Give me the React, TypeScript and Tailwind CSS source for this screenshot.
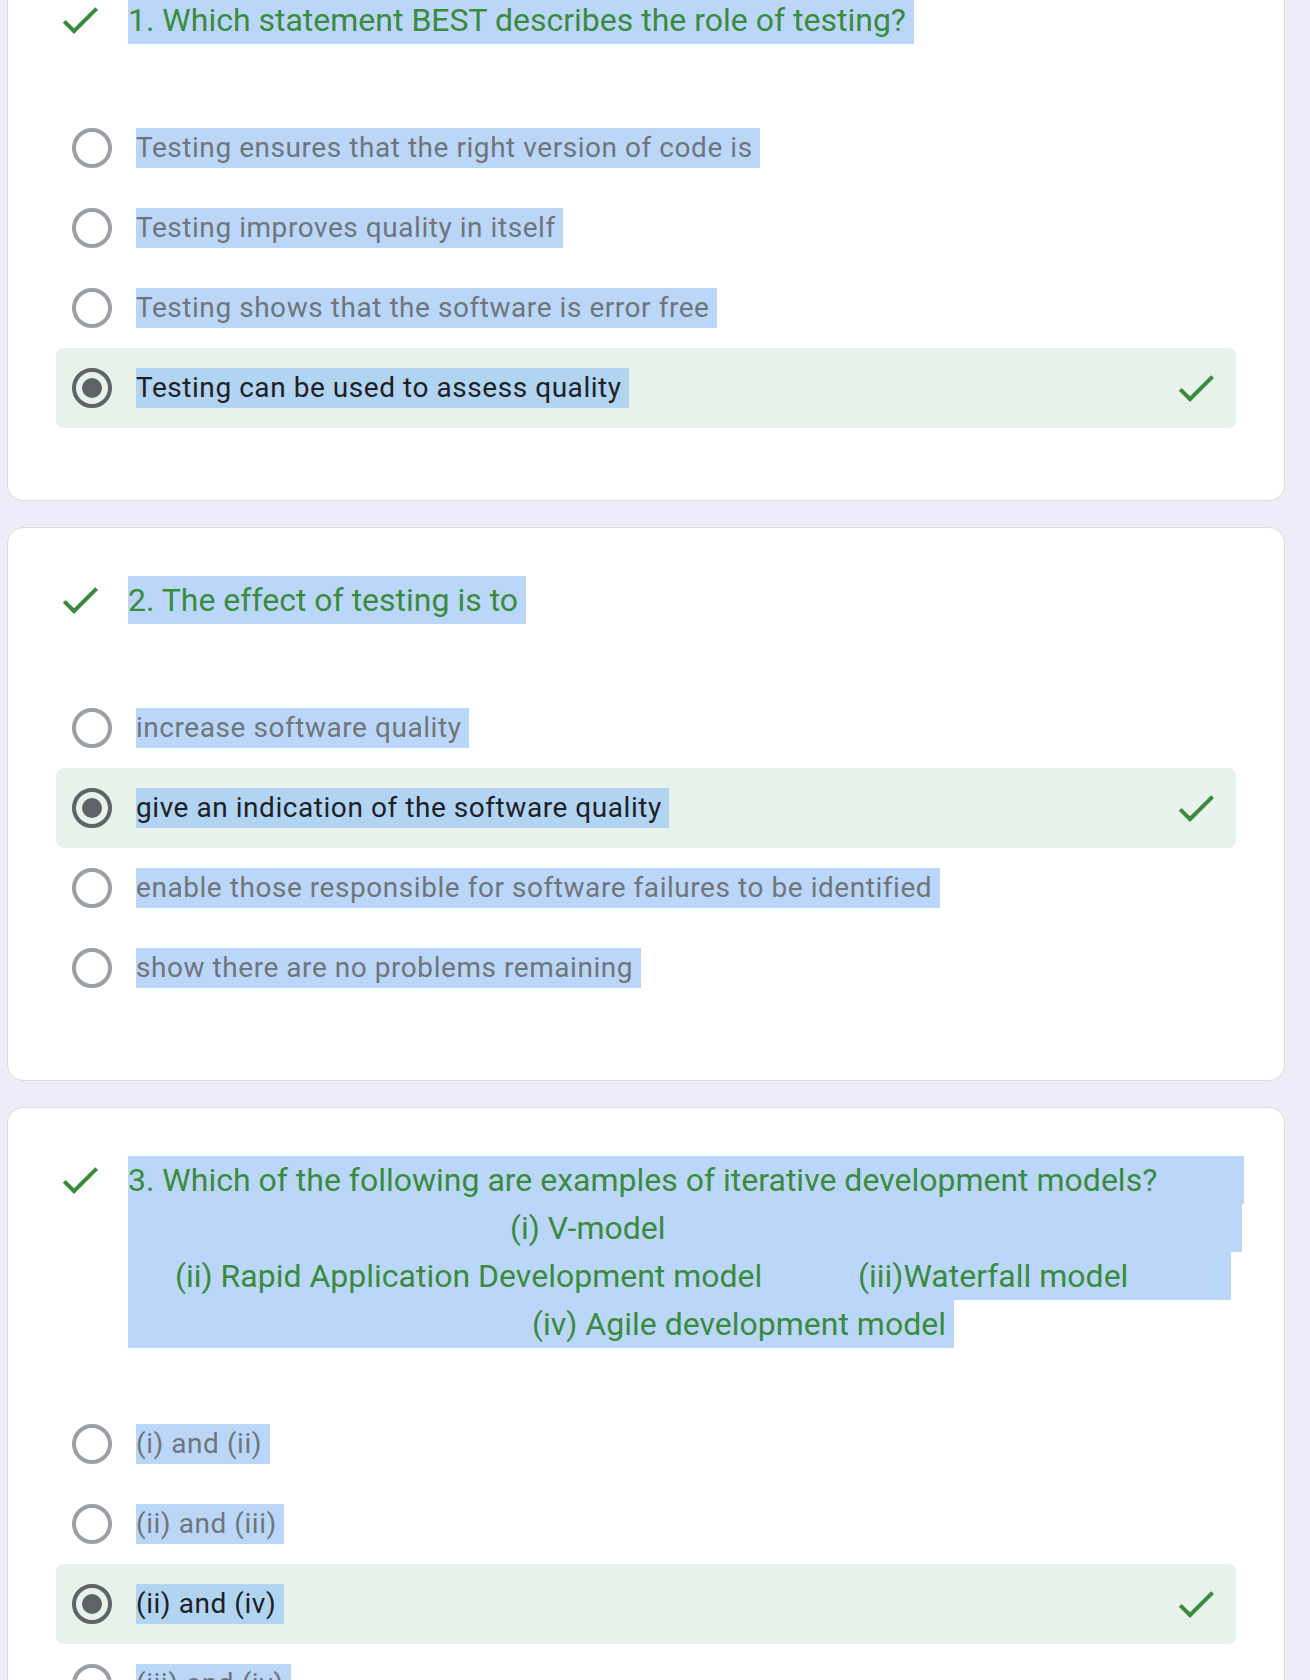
import React from "react";

function Check({ className }: { className?: string }) {
  return (
    <svg viewBox="0 0 24 24" className={className} fill="#3a8b3e">
      <path d="M9 16.17L4.83 12l-1.42 1.41L9 19 21 7l-1.41-1.41z" />
    </svg>
  );
}

function Radio({ selected }: { selected?: boolean }) {
  return (
    <div
      className={`w-[40px] h-[40px] shrink-0 rounded-full border-[4px] flex items-center justify-center ${
        selected ? "border-[#5f6368]" : "border-[#9aa0a6]"
      }`}
    >
      {selected && <div className="w-[20px] h-[20px] rounded-full bg-[#5f6368]" />}
    </div>
  );
}

function Option({ text, selected }: { text: string; selected?: boolean }) {
  return (
    <div
      className={`flex items-center h-[80px] px-[16px] rounded-[8px] ${
        selected ? "bg-[#e7f3ea]" : ""
      }`}
    >
      <Radio selected={selected} />
      <span
        className={`ml-[24px] inline-block whitespace-pre text-[28px] leading-[40px] tracking-[0.55px] ${
          selected ? "bg-[#b2d4f3] text-[#202124]" : "bg-[#bad7f9] text-[#70757a]"
        }`}
      >
        {text + " "}
      </span>
      {selected && <Check className="ml-auto w-[48px] h-[48px] shrink-0" />}
    </div>
  );
}

function Card({
  title,
  options,
  gap,
}: {
  title: React.ReactNode;
  options: { text: string; selected?: boolean }[];
  gap: string;
}) {
  return (
    <div className="bg-white border border-[#dadce0] rounded-[16px] pt-[48px] pb-[72px] px-[48px]">
      <div className="flex gap-[24px]">
        <Check className="w-[48px] h-[48px] shrink-0" />
        <div className="text-[32px] leading-[48px] text-[#3a8b3e]">{title}</div>
      </div>
      <div className={`flex flex-col ${gap}`}>
        {options.map((o, i) => (
          <Option key={i} text={o.text} selected={o.selected} />
        ))}
      </div>
    </div>
  );
}

export default function App() {
  return (
    <div className="h-[1680px] overflow-hidden bg-[#f0ebf8] font-['Roboto',sans-serif]">
      <div className="ml-[7px] w-[1278px] mt-[-53px] flex flex-col gap-[26px]">
        <Card
          gap="mt-[64px]"
          title={
            <span className="inline-block whitespace-pre bg-[#bad7f9]">
              {"1. Which statement BEST describes the role of testing? "}
            </span>
          }
          options={[
            { text: "Testing ensures that the right version of code is" },
            { text: "Testing improves quality in itself" },
            { text: "Testing shows that the software is error free" },
            { text: "Testing can be used to assess quality", selected: true },
          ]}
        />
        <Card
          gap="mt-[64px]"
          title={
            <span className="inline-block whitespace-pre bg-[#bad7f9]">
              {"2. The effect of testing is to "}
            </span>
          }
          options={[
            { text: "increase software quality" },
            { text: "give an indication of the software quality", selected: true },
            { text: "enable those responsible for software failures to be identified" },
            { text: "show there are no problems remaining" },
          ]}
        />
        <Card
          gap="mt-[56px]"
          title={
            <div className="flex flex-col">
              <div className="h-[48px] w-[1116px] bg-[#bad7f9] whitespace-pre">
                3. Which of the following are examples of iterative development models?
              </div>
              <div className="h-[48px] w-[1114px] bg-[#bad7f9] whitespace-pre pl-[382px]">
                (i) V-model
              </div>
              <div className="h-[48px] w-[1103px] bg-[#bad7f9] whitespace-pre flex">
                <span className="ml-[47px]">(ii) Rapid Application Development model</span>
                <span className="absolute ml-[730px]">(iii)Waterfall model</span>
              </div>
              <div className="h-[48px] w-[826px] bg-[#bad7f9] whitespace-pre pl-[404px]">
                (iv) Agile development model
              </div>
            </div>
          }
          options={[
            { text: "(i) and (ii)" },
            { text: "(ii) and (iii)" },
            { text: "(ii) and (iv)", selected: true },
            { text: "(iii) and (iv)" },
          ]}
        />
      </div>
    </div>
  );
}
